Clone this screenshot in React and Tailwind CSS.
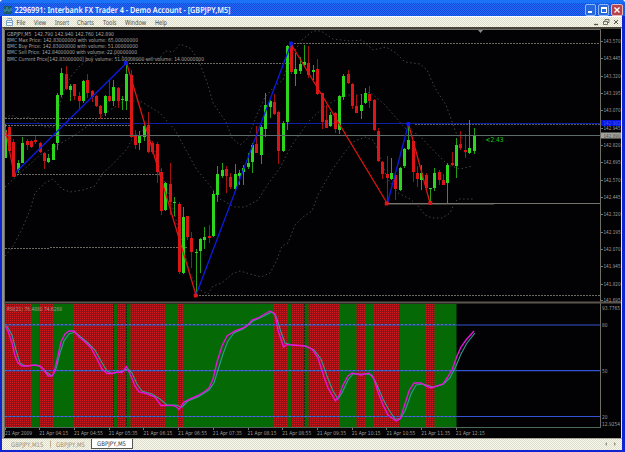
import React from 'react';

const UP = '#2cd61c';
const DOWN = '#dc1616';

// x, high, low, body top, body bottom, direction
const candles = [
  [5, 124, 158, 130, 158, 1], [9, 126, 152, 127, 151, 0], [13.3, 139, 176, 142, 175, 0], [18, 160, 173, 163, 170, 1],
  [22.5, 137, 163, 143, 163, 1], [27, 139, 150, 141, 145, 0], [31.4, 140, 148, 141, 147, 0], [35.7, 136, 144, 140, 142, 0],
  [40, 142, 153, 143, 152, 0], [44.3, 153, 169, 153, 161, 0], [48.5, 154, 163, 158, 162, 1], [53, 143, 160, 144, 160, 1],
  [57.3, 93, 150, 95, 143, 1], [61.5, 68, 97, 73, 95, 1], [66, 66, 90, 74, 89, 0], [70.3, 84, 101, 86, 90, 1],
  [74.6, 84, 100, 84, 96, 0], [79, 92, 109, 96, 101, 0], [83.3, 80, 103, 81, 101, 1], [87.6, 74, 98, 80, 93, 0],
  [92, 90, 102, 91, 97, 0], [96.4, 95, 107, 96, 106, 0], [100.7, 105, 119, 106, 114, 0], [105, 95, 116, 96, 113, 1],
  [109.4, 80, 102, 96, 101, 0], [113.7, 80, 106, 87, 101, 1], [118, 87, 108, 88, 101, 0], [122.4, 96, 110, 99, 100, 1],
  [126.7, 64, 110, 74, 101, 1], [131, 70, 138, 75, 137, 0], [135.4, 130, 149, 136, 145, 0], [139.6, 131, 150, 136, 143, 1],
  [144, 124, 141, 126, 137, 1], [148.4, 112, 153, 125, 152, 0], [152.8, 141, 154, 143, 152, 0], [157.2, 142, 183, 144, 172, 0],
  [161.4, 168, 215, 172, 211, 0], [165.7, 182, 211, 183, 210, 1], [170.3, 163, 215, 184, 202, 0], [174.6, 197, 216, 202, 203, 1],
  [179, 202, 274, 204, 272, 0], [183.2, 207, 274, 217, 273, 1], [187.5, 216, 240, 216, 237, 0], [191.8, 232, 268, 238, 252, 0],
  [196.2, 249, 295, 252, 253, 1], [200.5, 238, 273, 239, 251, 1], [204.8, 227, 249, 237, 240, 1], [209.2, 225, 243, 236, 238, 0],
  [213.5, 191, 237, 194, 236, 1], [217.8, 166, 202, 174, 195, 1], [222.2, 163, 178, 170, 176, 1], [226.5, 166, 193, 169, 176, 0],
  [230.8, 173, 189, 177, 187, 0], [235.2, 164, 191, 174, 189, 1], [239.5, 170, 185, 173, 176, 1], [243.8, 165, 185, 168, 172, 1],
  [248, 153, 169, 163, 167, 1], [252.4, 143, 173, 145, 162, 1], [256.7, 126, 153, 144, 153, 0], [261.2, 125, 164, 127, 155, 1],
  [265.6, 93, 137, 105, 129, 1], [270, 100, 118, 101, 107, 1], [274.4, 94, 115, 102, 114, 0], [278.6, 111, 164, 112, 151, 0],
  [283, 121, 152, 123, 151, 1], [287.3, 45, 130, 46, 122, 1], [291.5, 44, 74, 45, 72, 0], [295.8, 53, 86, 69, 74, 1],
  [300.3, 57, 74, 64, 71, 1], [304.6, 45, 67, 62, 65, 1], [308.8, 46, 78, 63, 75, 0], [313.3, 65, 80, 70, 72, 1],
  [317.6, 59, 95, 69, 94, 0], [322, 93, 129, 93, 122, 0], [326.4, 105, 128, 120, 128, 0], [330.5, 112, 127, 115, 126, 1],
  [335, 112, 133, 113, 129, 0], [339.3, 95, 134, 96, 130, 1], [343.7, 74, 100, 76, 97, 1], [348, 70, 84, 74, 83, 0],
  [352.3, 83, 109, 84, 106, 0], [356.7, 95, 113, 106, 113, 0], [361, 94, 119, 105, 111, 1], [365.4, 88, 104, 93, 103, 1],
  [369.6, 86, 108, 94, 101, 0], [374, 99, 131, 100, 130, 0], [378.4, 128, 162, 131, 161, 0], [382.7, 161, 179, 162, 174, 0],
  [387.3, 156, 203, 174, 178, 0], [391.4, 158, 180, 173, 179, 1], [395.7, 174, 200, 175, 189, 0], [400, 167, 191, 168, 190, 1],
  [404.4, 148, 168, 149, 166, 1], [408.6, 124, 150, 140, 149, 1], [413, 141, 182, 141, 172, 0], [417.5, 166, 187, 173, 179, 0],
  [421.7, 165, 190, 173, 180, 1], [426, 173, 188, 175, 188, 0], [430.3, 188, 203, 188, 189, 1], [434.7, 168, 191, 173, 188, 1],
  [439.2, 170, 185, 172, 180, 0], [443.5, 174, 185, 180, 185, 0], [447.8, 163, 203, 165, 183, 1], [452.3, 152, 166, 163, 165, 0],
  [456.4, 138, 178, 145, 166, 1], [460.7, 131, 150, 144, 148, 0], [465.3, 134, 158, 150, 152, 0], [469.6, 120, 154, 148, 153, 1],
  [474, 128, 154, 135, 151, 1],
];

const bands = [
  '5,118 11,115 20,119 28,117 37,122 45,127 55,127 58,110 65,88 72,75 80,66 90,58 104,52 120,56 140,60 160,58 165,51 173,52 180,44 190,48 198,59 207,82 213,103 226,122 232,138 240,145 248,138 256,117 265,97 275,86 283,80 290,57 303,39 313,31 321,31 333,39 350,41 362,40 373,50 386,47 396,53 405,62 420,64 427,70 435,88 446,105 455,130 457,135 464,139',
  '5,187 20,173 40,155 53,148 75,135 95,121 110,110 125,101 140,101 160,113 175,130 187,152 197,170 207,182 220,199 235,207 245,207 258,200 268,184 280,168 288,152 294,142 310,120 325,106 345,95 360,95 370,92 385,105 405,128 420,136 435,152 448,165 460,169 472,166',
  '5,256 12,248 22,229 30,210 35,193 45,183 53,179 62,189 70,192 83,190 95,186 103,173 115,162 127,149 133,137 142,130 152,142 162,174 172,205 181,238 190,274 200,290 208,294 213,286 222,283 232,274 240,271 250,274 261,277 270,273 276,262 282,246 288,243 295,225 303,217 312,211 318,195 332,170 345,152 353,142 365,137 373,140 378,150 387,178 398,193 410,199 418,206 425,215 432,218 442,218 450,213 455,202 458,199 474,199',
];

const swings = [
  [14, 174, 126.5, 63, '#0c1ce4'],
  [196, 295, 291, 44, '#0c1ce4'],
  [387.5, 203, 408.5, 124, '#0c1ce4'],
  [5, 127, 14, 174, DOWN],
  [126.5, 63, 196, 295, DOWN],
  [291, 44, 387, 203, DOWN],
  [408.5, 124, 430, 203, DOWN],
];

const pivots = [
  [126, 63, '#0c1ce4'], [291, 43.5, '#0c1ce4'], [408.3, 124, '#0c1ce4'],
  [14, 175, DOWN], [195.7, 295.5, DOWN], [386.7, 203.5, DOWN], [430.3, 203, DOWN],
];

const levels = [
  [126, 290, 63.5], [291, 600, 43.5], [5, 130, 118.5], [5, 130, 125.5],
  [14, 161, 174.5], [5, 50, 248.5], [50, 187, 247.5], [196, 600, 295.5],
];

const prices = [
  ['143.570', 41], ['143.445', 58], ['143.320', 76], ['143.195', 93], ['143.070', 110], ['142.945', 128],
  ['142.820', 145], ['142.695', 162], ['142.570', 180], ['142.445', 197], ['142.320', 214], ['142.195', 232],
  ['142.070', 249], ['141.945', 266], ['141.820', 284], ['141.695', 300],
];

const info = [
  ['GBPJPY,M5  142.790 142.940 142.760 142.890', 35.5, 107],
  ['BMC Max Price: 142.83000000 with volume: 65.00000000', 41.5, 131],
  ['BMC Buy Price: 142.83000000 with volume: 51.00000000', 48, 131],
  ['BMC Sell Price: 142.84000000 with volume: 22.00000000', 54.3, 130],
  ['BMC Current Price[142.83000000] buy volume: 51.00000000 sell volume: 14.00000000', 61, 197],
];

const redZones = [
  [5, 31], [39.5, 53], [74, 113.5], [117.5, 126], [130.5, 165.5], [178, 183], [274, 287],
  [291, 304.5], [308.5, 339], [356.5, 365], [374, 400], [426, 434.5],
];

const rsi =
  '5,325.5 8,331 12,343 15,356 18,363 22,366 28,366 34,365 40,366 44,370 48,376 52,376 54,373 57,360 61,342 65,334 69,331 74,331 79,337 84,341 91,348 97,359 102,369 107,373.5 112,373.5 117,372 122,372.5 126.5,366.5 130,374 135,386 139,392 146,393.5 155,397 161,405.5 173,405.5 176,406.5 179,409.5 184,402 190,399 197,396 204,392 209,388 213,379 217,362 222,346 227,336 235,331 243,328 247,326 252,320 258,318 263,315 270,311 275,314 278,330 283.5,347 287,344.5 305,346 312,349 318,358 324,377 328,388 335.5,401 339,396 343,385 348,376 352,373 361,375 369,373 374,379 378,392 383,405 388,415 396,421 400,419 404,407 409,391 414,383 421,383 426,386 431,388 437,386 443,384 447,378 452,370 457,356 461,347 466,340 474,331';

const signal =
  '7,326 12,335 16,350 20,363 25,366 36,365 41,367 46,372 52,376 56,369 60,353 64,341 69,334 75,332 82,338 88,343 95,350 101,361 107,371 112,373.5 120,372 128,369 132,373 137,384 142,391 152,394 160,399 167,405 176,405 182,407 188,401 198,397 209,390 214,383 218,370 223,354 228,341 234,333 243,329 253,321 264,316 272,312 276,316 281,332 285,343 292,345 306,346 314,350 321,359 327,376 333,391 338,399 342,393 348,380 353,374 366,374 372,375 377,385 383,399 389,410 395,419 400,419 405,411 411,394 416,385 423,384 433,387 443,384.5 450,378 456,366 461,354 467,343 475,333';

const times = ['2009', '04:15', '04:55', '05:35', '06:15', '06:55', '07:35', '08:15', '08:55', '09:35', '10:15', '10:55', '11:35', '12:15'];

const checker =
  'bg-[#efeee2] bg-[repeating-conic-gradient(#dddccb_0_25%,#faf9ee_0_50%)] bg-[length:2px_2px]';

const TitleBar = () => (
  <div className="flex h-[16px] items-center justify-between rounded-t-[4px] border-t-[3px] border-[#1b72f6] bg-[#1e5bdc] bg-[repeating-conic-gradient(#1a49dc_0_25%,#1c6cf4_0_50%)] bg-[length:2px_2px] pr-[2px] pl-[4px]">
    <div className="flex items-center gap-[2px]">
      <svg width="8" height="8" viewBox="0 0 8 8">
        <rect width="8" height="8" fill="#175a73" />
        <path d="M1 6V3M3 5V1M5 6V3M7 5V2" stroke="#55a0a0" strokeWidth="1" />
      </svg>
      <svg width="270" height="14" className="overflow-visible font-['Noto_Sans',sans-serif]">
        <text x="0.5" y="10" fontSize="8.5" fontWeight="600" fill="#f4f7ff" textLength="216" lengthAdjust="spacingAndGlyphs">
          2296991: Interbank FX Trader 4 - Demo Account - [GBPJPY,M5]
        </text>
      </svg>
    </div>
    <div className="flex gap-[2px]">
      <div className="flex h-[12px] w-[11px] items-end rounded-[2px] border border-[#8bb8f4] bg-[#2767dc] p-[2px]">
        <div className="h-[2px] w-[4px] bg-white" />
      </div>
      <div className="flex h-[12px] w-[11px] items-center justify-center rounded-[2px] border border-[#8bb8f4] bg-[#2767dc]">
        <div className="h-[6px] w-[6px] border border-t-2 border-white" />
      </div>
      <div className="flex h-[12px] w-[12px] items-center justify-center rounded-[2px] border border-[#e8b8b8] bg-[#b9434c]">
        <svg width="6" height="6" viewBox="0 0 6 6">
          <path d="M.5.5l5 5M5.5.5l-5 5" stroke="#fff" strokeWidth="1.4" />
        </svg>
      </div>
    </div>
  </div>
);

const menus = [['File', 14.5, 9], ['View', 32, 12], ['Insert', 53, 14], ['Charts', 75, 17], ['Tools', 101, 13.5], ['Window', 123, 21], ['Help', 153, 12]];

const MenuBar = () => (
  <div className={`flex h-[11px] items-center justify-between border-t border-white pr-[3px] ${checker}`}>
    <svg width="180" height="10" className="overflow-visible font-['Noto_Sans',sans-serif]">
      <path d="M4.5 3.5h6v5h-6zM5.500 1.5h4v2M4.5 5.5h6" fill="#f4f8fb" stroke="#79a4c8" />
      {menus.map(([label, x, w]) => (
        <text key={label} x={x} y="7.5" fontSize="7" fill="#4c4c46" textLength={w} lengthAdjust="spacingAndGlyphs">
          {label}
        </text>
      ))}
    </svg>
    <svg width="26" height="9" fill="none" stroke="#55554e">
      <path d="M1 6.5h4" strokeWidth="1.3" />
      <path d="M10.5 3.5h4v3h-4zM12 3V1.500h4v3h-1.500" strokeWidth=".8" />
      <path d="M21 2l4 4M25 2l-4 4" />
    </svg>
  </div>
);

const PriceChart = () => (
  <g>
    {bands.map((points) => (
      <polyline key={points} points={points} fill="none" stroke="#4f5555" strokeWidth=".8" strokeDasharray="1.5 2.5" />
    ))}
    {levels.map(([x1, x2, y]) => (
      <path key={`${x1}-${y}`} d={`M${x1} ${y}H${x2}`} stroke="#6b6b64" strokeDasharray="2 1" />
    ))}
    <path d="M387 203.500H600" stroke="#75756f" />
    <path d="M387 204.500H494" stroke="#33332f" />
    <path d="M5 123.500H600" stroke="#1020a8" />
    <path d="M415 124.500H600" stroke="#57575c" strokeDasharray="2 1" />

    {candles.map(([x, high, low, top, bottom, up]) => (
      <g key={x} fill={up ? UP : DOWN}>
        <rect x={Math.round(x - 0.5)} y={high} width="1" height={low - high} opacity=".75" />
        <rect x={Math.round(x - 0.5) - 1} y={top} width="3" height={Math.max(bottom - top, 1)} />
      </g>
    ))}
    <path d="M5 135.500H600" stroke="#5e6b6b" />
    {swings.map(([x1, y1, x2, y2, color]) => (
      <line key={`${x1}-${y1}-${x2}`} x1={x1} y1={y1} x2={x2} y2={y2} stroke={color} strokeWidth="1.3" />
    ))}
    {pivots.map(([x, y, color]) => (
      <rect key={x} x={x - 2} y={y - 2} width="4" height="4" rx="1" fill={color} />
    ))}

    {info.map(([line, y, w]) => (
      <text key={y} x="7" y={y} className="whitespace-pre" fontSize="5.5" fill="#a8a8a4" textLength={w} lengthAdjust="spacingAndGlyphs">
        {line}
      </text>
    ))}
    <text x="485.500" y="142" fontSize="6.8" fill="#18cc18" textLength="18" lengthAdjust="spacingAndGlyphs">{'<2:43'}</text>
    <path d="M478 30h5l-2.500 3z" fill="#85898c" />
  </g>
);

const RsiChart = () => (
  <g>
    <rect x="5" y="304" width="451.500" height="123" fill="#056905" />
    {redZones.map(([x1, x2]) => (
      <rect key={x1} x={x1} y="304" width={x2 - x1} height="123" fill="url(#redDots)" />
    ))}
    <path d="M126.500 304V427M113.500 304V427M304.500 304V427" stroke="#152915" strokeDasharray="2 1" />
    <path d="M5 325H600M5 370.700H600M5 416.500H600" stroke="#3455d2" strokeWidth="1.200" />
    <path d="M5 324.500H456M5 370.500H456M5 416.500H456" stroke="#4e70c4" strokeDasharray="2 2" />
    <polyline points={signal} fill="none" stroke="#2f9c92" strokeWidth="1.1" />
    <polyline points={rsi} fill="none" stroke="#e812dc" strokeWidth="1.4" />
    <text x="7" y="311" fontSize="5.5" fill="#b0988c" textLength="55" lengthAdjust="spacingAndGlyphs">
      RSI(21) 76.4880 74.6268
    </text>
  </g>
);

const Axes = () => (
  <g fontSize="5.5" fill="#a09f9b">
    <path d="M4.500 437V29.500H600.500V427" fill="none" stroke="#706e66" />
    <path d="M4 302.500H621" stroke="#5c574e" strokeWidth="2" />
    <path d="M5 427.500H601" stroke="#4c6a58" />
    {prices.map(([label, y]) => (
      <g key={label}>
        <path d={`M601 ${y + 0.5}h2`} stroke="#77756e" />
        <text x="603.500" y={y + 2} textLength="17" lengthAdjust="spacingAndGlyphs">{label}</text>
      </g>
    ))}
    <rect x="601" y="120" width="20" height="6" fill="#0a14e0" />
    <text x="603.500" y="125" fill="#3f5ff0" textLength="17" lengthAdjust="spacingAndGlyphs">142.982</text>
    <rect x="601" y="132.500" width="20" height="6" fill="#a2a29f" />
    <text x="603.500" y="137.500" fill="#54544f" textLength="17" lengthAdjust="spacingAndGlyphs">142.890</text>

    <rect x="601" y="304" width="20" height="10" fill="#020104" />
    <text x="602" y="309.500" textLength="18" lengthAdjust="spacingAndGlyphs">93.7765</text>
    <text x="602" y="327" textLength="5.500" lengthAdjust="spacingAndGlyphs">80</text>
    <text x="602" y="372.500" textLength="5.500" lengthAdjust="spacingAndGlyphs">50</text>
    <text x="602" y="418.500" textLength="5.500" lengthAdjust="spacingAndGlyphs">20</text>
    <text x="602" y="426" textLength="18" lengthAdjust="spacingAndGlyphs">12.9254</text>

    {times.map((time, i) => {
      const x = i === 0 ? 5 : 4.5 + i * 34.72;
      return (
        <g key={time}>
          <path d={`M${Math.round(x) + 0.5} 428v2`} stroke="#77756e" />
          <text x={x} y="435" textLength={i === 0 ? 27 : 29} lengthAdjust="spacingAndGlyphs">{`21 Apr ${time}`}</text>
        </g>
      );
    })}
  </g>
);

const Tabs = () => (
  <div className={`flex h-[12px] items-start justify-between border-t border-[#a9a798] pr-[5px] ${checker}`}>
    <div className="flex h-[11px]">
      <svg width="89" height="11" fontSize="6.3" fill="#a08f70" className="overflow-visible">
        <text x="9" y="7.500" textLength="32.500" lengthAdjust="spacingAndGlyphs">GBPJPY,M15</text>
        <path d="M48.500 1.500v7" stroke="#c2af91" />
        <text x="54" y="7.500" textLength="29" lengthAdjust="spacingAndGlyphs">GBPJPY,M5</text>
      </svg>
      <div className="h-[10px] w-[42px] border border-t-0 border-[#55554f] bg-white">
        <svg width="40" height="9" className="block overflow-visible">
          <text x="5" y="7.200" fontSize="6.3" fill="#36363a" textLength="29" lengthAdjust="spacingAndGlyphs">GBPJPY,M5</text>
        </svg>
      </div>
    </div>
    <svg width="14" height="10" fill="#96958a">
      <path d="M4 3v4L2 5zM11 3v4l2-2z" />
    </svg>
  </div>
);

const App = () => {
  return (
    <div className="flex h-[452px] w-[625px] flex-col overflow-hidden bg-white font-['DejaVu_Sans_Condensed','DejaVu_Sans',sans-serif] [text-rendering:geometricPrecision]">
      <div className="flex h-[452px] flex-col rounded-t-[4px] bg-[#1024cf]">
        <TitleBar />
        <div className="flex flex-1 flex-col border-r-[3px] border-b-2 border-l-2 border-[#1024cf]">
          <MenuBar />
          <div className="flex-1 border-t-2 border-r border-l-2 border-t-[#47453c] border-r-[#e6e6dc] border-l-[#8a958c] bg-[#020104]">
            <svg width="617" height="409" viewBox="4 29 617 409" className="block overflow-visible">
              <defs>
                <pattern id="redDots" width="2" height="2" patternUnits="userSpaceOnUse">
                  <rect width="2" height="2" fill="#8a141a" />
                  <rect width="1" height="1" fill="#d01a1e" />
                </pattern>
              </defs>
              <PriceChart />
              <RsiChart />
              <Axes />
            </svg>
          </div>
          <Tabs />
        </div>
      </div>
    </div>
  );
};

export default App;
